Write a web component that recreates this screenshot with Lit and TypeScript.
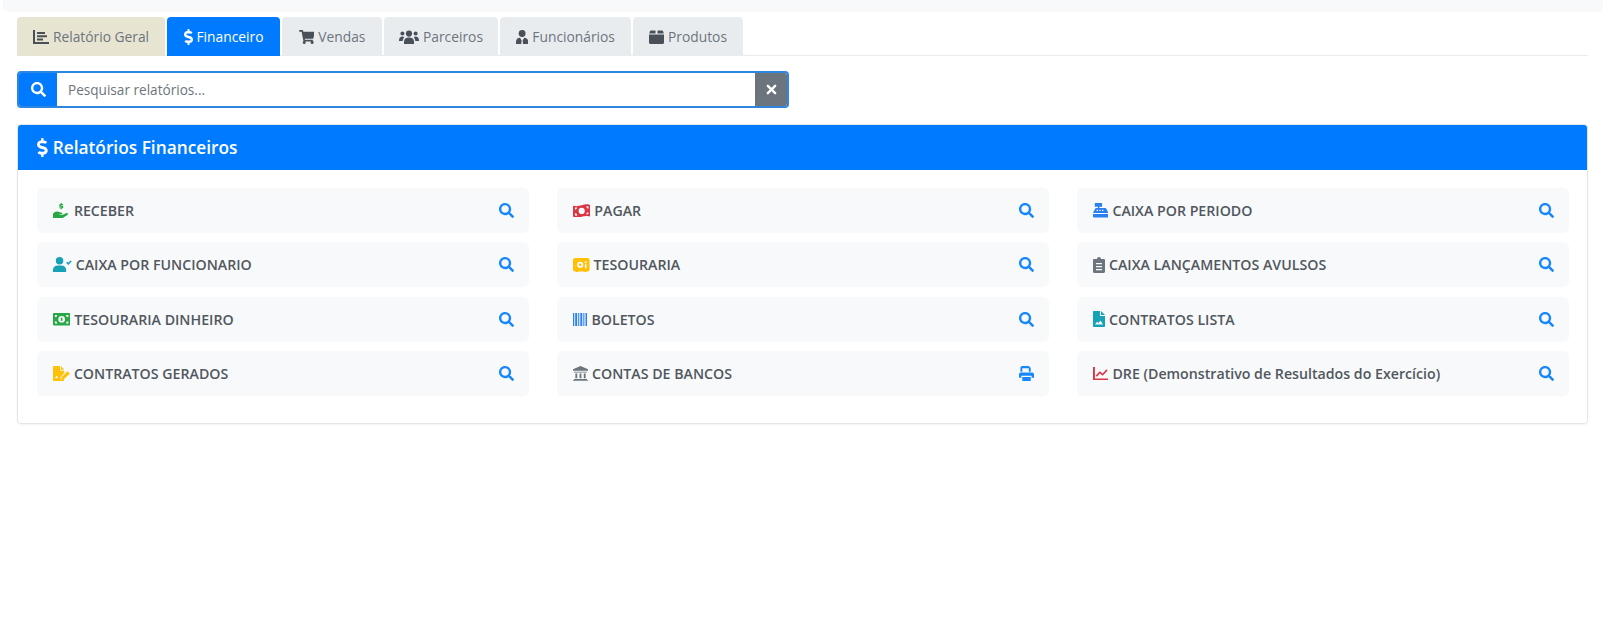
import { LitElement, html, svg, css } from "lit";
import { customElement } from "lit/decorators.js";

const icon = (vb: string, body: unknown, cls = "") =>
  html`<svg class="ic ${cls}" viewBox=${vb} fill="currentColor" aria-hidden="true">${body}</svg>`;

const p = (d: string) => svg`<path d=${d} />`;

const SEARCH =
  "M505 442.7L405.3 343c-4.5-4.5-10.6-7-17-7H372c27.6-35.3 44-79.7 44-128C416 93.1 322.9 0 208 0S0 93.1 0 208s93.1 208 208 208c48.3 0 92.7-16.4 128-44v16.3c0 6.4 2.5 12.5 7 17l99.7 99.7c9.4 9.4 24.6 9.4 33.9 0l28.3-28.3c9.4-9.4 9.4-24.6.1-34zM208 336c-70.7 0-128-57.2-128-128 0-70.7 57.2-128 128-128 70.7 0 128 57.2 128 128 0 70.7-57.2 128-128 128z";
const DOLLAR =
  "M209.2 233.4l-108-31.6C88.7 198.2 80 186.5 80 173.5c0-16.3 13.2-29.5 29.5-29.5h66.3c12.2 0 24.2 3.7 34.2 10.5 6.1 4.1 14.3 3.1 19.5-2l34.8-34c7.1-6.9 6.1-18.4-1.8-24.5C238 74.8 207.4 64.1 176 64V16c0-8.8-7.2-16-16-16h-32c-8.8 0-16 7.2-16 16v48h-2.5C45.8 64-5.4 118.7.5 183.6c4.2 46.1 39.4 83.6 83.8 96.6l102.5 30c12.5 3.7 21.2 15.3 21.2 28.3 0 16.3-13.2 29.5-29.5 29.5h-66.3C100 368 88 364.3 78 357.5c-6.1-4.1-14.3-3.1-19.5 2l-34.8 34c-7.1 6.9-6.1 18.4 1.8 24.5 24.5 19.2 55.1 29.9 86.5 30v48c0 8.8 7.2 16 16 16h32c8.8 0 16-7.2 16-16v-48.2c46.6-.9 90.3-28.6 105.7-72.7 21.5-61.6-14.6-124.8-72.5-141.7z";
const CART =
  "M528.12 301.319l47.273-208C578.806 78.301 567.391 64 551.99 64H159.208l-9.166-44.81C147.758 8.021 137.93 0 126.529 0H24C10.745 0 0 10.745 0 24v16c0 13.255 10.745 24 24 24h69.883l70.248 343.435C147.325 417.1 136 435.222 136 456c0 30.928 25.072 56 56 56s56-25.072 56-56c0-15.674-6.447-29.835-16.824-40h209.647C430.447 426.165 424 440.326 424 456c0 30.928 25.072 56 56 56s56-25.072 56-56c0-22.172-12.888-41.332-31.579-50.405l5.517-24.276c3.413-15.018-8.002-29.319-23.403-29.319H218.117l-6.545-32h293.145c11.206 0 20.92-7.754 23.403-18.681z";

const searchIcon = () => icon("0 0 512 512", p(SEARCH));
const dollarIcon = () => icon("0 0 288 512", p(DOLLAR));

const icons = {
  chartBar: () =>
    icon("0 0 16 14", p("M0 0h2v12h14v2H0zM4 2h8v2H4zM4 5.2h10v2H4zM4 8.4h6v2H4z")),
  cart: () => icon("0 0 576 512", p(CART)),
  users: () =>
    icon(
      "0 0 20 14",
      svg`<circle cx="10" cy="3.6" r="3.1"/><circle cx="3.4" cy="3.4" r="2"/><circle cx="16.6" cy="3.4" r="2"/><path d="M5 14v-2.2C5 9 7 7.6 10 7.6s5 1.4 5 4.2V14zM0 10.5C0 8 1.4 6.6 3.4 6.6c.8 0 1.4.2 2 .6C4.4 8.2 3.8 9.400 3.7 11H0zM20 10.500C20 8 18.600 6.600 16.600 6.600c-.8 0-1.400.2-2 .6 1 1 1.600 2.200 1.700 3.800H20z"/>`,
    ),
  userTie: () =>
    icon(
      "0 0 14 16",
      svg`<circle cx="7" cy="4" r="3.900"/><path d="M0 16v-2.500C0 10.600 2 8.800 4.600 8.800L6.400 12 6 16zM14 16v-2.500c0-2.900-2-4.700-4.600-4.700L7.600 12 8 16z"/>`,
    ),
  box: () =>
    icon(
      "0 0 15 14",
      svg`<path d="M0 4.500h15v8a1.500 1.500 0 0 1-1.500 1.500h-12A1.500 1.500 0 0 1 0 12.500zM2 0.500h4.500v3H0.300l.5-2A1.500 1.500 0 0 1 2 0.500zM8.500 0.500H13a1.500 1.500 0 0 1 1.200 1l.5 2H8.500z"/>`,
    ),
  times: () =>
    icon(
      "0 0 12 12",
      svg`<path d="M2 2l8 8M10 2l-8 8" fill="none" stroke="currentColor" stroke-width="2.600" stroke-linecap="round"/>`,
    ),
  print: () =>
    icon(
      "0 0 16 16",
      svg`<path d="M3.500 0h7l2 2v4h-2V2.500h-7V6h-2V2A2 2 0 0 1 3.500 0zM2 6.800h12a2 2 0 0 1 2 2V12.500h-2.500V10.500h-11V12.500H0V8.800a2 2 0 0 1 2-2zM3.500 11.800h9V16h-9z"/>`,
    ),
  hand: () =>
    icon(
      "0 0 18 16",
      svg`<path d="M0 11.500C1.500 9.500 3.500 8.800 5.500 9.300l3.700 1c1.200.3 1 1.900-.4 1.900H6.500v.6h3.200l4.300-2c1.500-.7 2.700.9 1.300 1.900l-4.500 3.100c-.5.300-1 .4-1.600.4H4.500L2.500 16H0z"/><path d="M8.100 0h1.300v1h1.300v1.200H8.300v.5h1.800c.5 0 .8.400.8.800v1.300c0 .5-.4.800-.8.800h-.7v1H8.100v-1H6.800V4.400h2.400v-.5H7.400c-.5 0-.8-.4-.8-.8V2c0-.5.4-.8.8-.8h.7z"/>`,
    ),
  moneyTilt: () =>
    icon(
      "0 0 18 14",
      svg`<path fill-rule="evenodd" d="M1 1.800C6 3.600 12 -1 17 .8c.6.2 1 .8 1 1.400v9.900c0 .6-.5 1-1 .8C12 11 6 15.500 1 13.700c-.6-.2-1-.8-1-1.400V2.600c0-.6.5-1 1-.8zM9 4a3.200 3.200 0 1 0 0 6.400A3.200 3.200 0 0 0 9 4zM2 3.500v2.400a2.300 2.300 0 0 0 2.300-2.200zM16 2.400l-2.300.3A2.300 2.300 0 0 0 16 4.800zM2 9.500v2.400l2.300.3A2.300 2.300 0 0 0 2 9.500zM16 8.500a2.300 2.300 0 0 0-2.300 2.300l2.300-.4z"/>`,
    ),
  vault: () =>
    icon(
      "0 0 16 14",
      svg`<path fill-rule="evenodd" d="M2 0h12a2 2 0 0 1 2 2v9a2 2 0 0 1-2 2h-1v1h-2v-1H5v1H3v-1H2a2 2 0 0 1-2-2V2a2 2 0 0 1 2-2zM7 3.500a3 3 0 1 0 0 6 3 3 0 0 0 0-6zM7 5.200a1.300 1.300 0 1 1 0 2.600 1.300 1.300 0 0 1 0-2.600zM11.500 3v2h1.500V3zM11.500 6v4H13V6z"/>`,
    ),
  userCheck: () =>
    icon(
      "0 0 20 16",
      svg`<circle cx="7" cy="4" r="4"/><path d="M0 16v-2.300C0 10.800 2.200 9 5 9h4c2.800 0 5 1.800 5 4.700V16zM14 6.300l1.200-1.200 1.100 1.100 2.500-2.500L20 4.900l-3.700 3.700z"/>`,
    ),
  clipboard: () =>
    icon(
      "0 0 12 16",
      svg`<path fill-rule="evenodd" d="M4 2a2 2 0 0 1 4 0h2.800c.7 0 1.200.5 1.200 1.200v11.600c0 .7-.5 1.200-1.200 1.200H1.200C.5 16 0 15.500 0 14.800V3.200C0 2.500.5 2 1.200 2zM3 6v1.300h6V6zM3 9v1.300h6V9zM3 12v1.300h6V12z"/>`,
    ),
  moneyBill: () =>
    icon(
      "0 0 18 13",
      svg`<path fill-rule="evenodd" d="M1 0h16a1 1 0 0 1 1 1v11a1 1 0 0 1-1 1H1a1 1 0 0 1-1-1V1a1 1 0 0 1 1-1zM9 3a3.500 3.500 0 1 0 0 7 3.500 3.500 0 0 0 0-7zM2 2v2.500A2.500 2.500 0 0 0 4.500 2zM13.500 2A2.500 2.500 0 0 0 16 4.500V2zM2 8.500V11h2.500A2.500 2.500 0 0 0 2 8.500zM16 8.500A2.500 2.500 0 0 0 13.500 11H16z"/><rect x="8.200" y="4.800" width="1.600" height="3.400"/>`,
    ),
  barcode: () =>
    icon(
      "0 0 15 14",
      svg`<rect x="0" width="1.300" height="14"/><rect x="2.300" width="2" height="14"/><rect x="5.400" width="1.100" height="14"/><rect x="7.600" width="2" height="14"/><rect x="10.700" width="1.100" height="14"/><rect x="13" width="2" height="14"/>`,
    ),
  fileImage: () =>
    icon(
      "0 0 12 16",
      svg`<path fill-rule="evenodd" d="M1 0h6v4.500c0 .3.200.5.500.5H12v10c0 .6-.4 1-1 1H1c-.6 0-1-.4-1-1V1c0-.6.400-1 1-1zM8 0l4 4H8zM2 13.500h8L7.500 9.500 5.500 12 4 10.800z"/>`,
    ),
  fileSign: () =>
    icon(
      "0 0 18 16",
      svg`<path fill-rule="evenodd" d="M1 0h6.500v4.500c0 .3.200.5.500.5h4v2.500L8 12v2l2 .2h2V15c0 .6-.4 1-1 1H1c-.6 0-1-.4-1-1V1c0-.6.400-1 1-1zM8.500 0l3.500 4H8.500zM2 12.500l2-2 1.500 1.500-1.500 1z"/><path d="M9 12l6.500-6.500L18 8l-6.500 6H9z"/>`,
    ),
  register: () =>
    icon(
      "0 0 17 16",
      svg`<path fill-rule="evenodd" d="M2 0h8v4H7v1.500h6.500c.6 0 1 .3 1.200 .9L17 11H0l2.300-4.600c.2-.6.600-.9 1.200-.9H5.500V4H2zM4 7.500v1.200h1.500V7.500zM7 7.500v1.200h1.500V7.500zM10 7.500v1.200h1.500V7.500z"/><path d="M0 12h17v3a1 1 0 0 1-1 1H1a1 1 0 0 1-1-1z"/>`,
    ),
  bank: () =>
    icon(
      "0 0 16 16",
      svg`<path d="M8 0l8 3.500V5H0V3.500zM1 6h14v1H1zM2.500 8h2v5h-2zM7 8h2v5H7zM11.500 8h2v5h-2zM1 13.800h14V15H1zM0 15.200h16V16H0z"/>`,
    ),
  chartLine: () =>
    icon(
      "0 0 16 14",
      svg`<path d="M0 0h2v12h14v2H0z"/><path d="M3.500 9.500l3.600-4 2.900 2.500 4.500-5" fill="none" stroke="currentColor" stroke-width="1.700"/>`,
    ),
};

type IconName = keyof typeof icons;

interface Tab {
  label: string;
  icon: () => unknown;
  width: number;
  kind?: string;
}

const TABS: Tab[] = [
  { label: "Relatório Geral", icon: icons.chartBar, width: 148, kind: "general" },
  { label: "Financeiro", icon: dollarIcon, width: 113, kind: "active" },
  { label: "Vendas", icon: icons.cart, width: 100 },
  { label: "Parceiros", icon: icons.users, width: 114 },
  { label: "Funcionários", icon: icons.userTie, width: 131 },
  { label: "Produtos", icon: icons.box, width: 110 },
];

interface Report {
  label: string;
  icon: IconName;
  color: string;
  size: string;
  print?: boolean;
}

const REPORTS: Report[] = [
  { label: "RECEBER", icon: "hand", color: "green", size: "s15" },
  { label: "PAGAR", icon: "moneyTilt", color: "red", size: "s13" },
  { label: "CAIXA POR PERIODO", icon: "register", color: "blue", size: "s14" },
  { label: "CAIXA POR FUNCIONARIO", icon: "userCheck", color: "teal", size: "s15" },
  { label: "TESOURARIA", icon: "vault", color: "yellow", size: "s14" },
  { label: "CAIXA LANÇAMENTOS AVULSOS", icon: "clipboard", color: "grey", size: "s16" },
  { label: "TESOURARIA DINHEIRO", icon: "moneyBill", color: "green", size: "s12" },
  { label: "BOLETOS", icon: "barcode", color: "blue", size: "s13" },
  { label: "CONTRATOS LISTA", icon: "fileImage", color: "teal", size: "s16" },
  { label: "CONTRATOS GERADOS", icon: "fileSign", color: "yellow", size: "s15" },
  { label: "CONTAS DE BANCOS", icon: "bank", color: "grey", size: "s15", print: true },
  { label: "DRE (Demonstrativo de Resultados do Exercício)", icon: "chartLine", color: "red", size: "s13" },
];

@customElement("app-root")
export class AppRoot extends LitElement {
  static styles = css`
    :host {
      display: block;
      font-family: "Open Sans", "Noto Sans", sans-serif;
      background: #fff;
      min-height: 636px;
    }
    .ic {
      display: block;
      height: 1em;
      width: auto;
      flex: none;
    }
    .strip {
      height: 12px;
      margin: 0 14px 0 3px;
      background: #f8f9fa;
      border-radius: 0 0 6px 6px;
    }
    .page {
      padding: 5px 29px 0 17px;
    }
    .tabs {
      display: flex;
      gap: 2px;
      height: 39px;
      box-sizing: border-box;
      border-bottom: 1px solid #e9ecef;
    }
    .tab {
      display: flex;
      align-items: center;
      justify-content: center;
      gap: 4px;
      box-sizing: border-box;
      height: 39px;
      background: #e9ecef;
      color: #6c757d;
      font-size: 13.8px;
      border-radius: 4px 4px 0 0;
    }
    .tab .ic {
      font-size: 14px;
      color: #495057;
    }
    .tab.general {
      background: #e8e4d2;
    }
    .tab.active {
      background: #007bff;
      color: #fff;
    }
    .tab.active .ic {
      color: #fff;
      font-size: 16px;
    }
    .search {
      display: flex;
      box-sizing: border-box;
      width: 772px;
      height: 37px;
      margin: 15px 0 16px;
      border: 2px solid #2f86df;
      border-radius: 4px;
      overflow: hidden;
    }
    .search-btn {
      display: flex;
      align-items: center;
      justify-content: center;
      flex: none;
      color: #fff;
      font-size: 15px;
    }
    .search-btn.go {
      width: 38px;
      background: #007bff;
    }
    .search-btn.clear {
      width: 32px;
      background: #6c757d;
      font-size: 11px;
    }
    .search-text {
      flex: 1;
      padding-left: 11px;
      line-height: 33px;
      font-size: 13.6px;
      color: #6c757d;
    }
    .card {
      border: 1px solid #e3e6e8;
      border-radius: 4px;
      height: 300px;
      box-sizing: border-box;
      overflow: hidden;
      box-shadow: 0 1px 2px rgba(0, 0, 0, 0.05);
    }
    .card-head {
      display: flex;
      align-items: center;
      gap: 5px;
      height: 45px;
      padding-left: 19px;
      background: #007bff;
      color: #fff;
      font-size: 17.3px;
      font-weight: 600;
    }
    .card-head .ic {
      font-size: 19px;
    }
    .grid {
      display: grid;
      grid-template-columns: repeat(3, 1fr);
      column-gap: 28px;
      row-gap: 9.4px;
      padding: 18px 18px 0 19px;
    }
    .item {
      display: flex;
      align-items: center;
      gap: 4px;
      height: 45px;
      padding: 0 16px;
      background: #f8f9fa;
      border-radius: 6px;
      font-size: 14.2px;
      font-weight: 600;
      color: #50575e;
    }
    .item-icon {
      flex: none;
    }
    .s12 { font-size: 12.5px; }
    .s13 { font-size: 13.5px; }
    .s14 { font-size: 14.5px; }
    .s15 { font-size: 15px; }
    .s16 { font-size: 16px; }
    .item-label {
      flex: 1;
    }
    .action {
      color: #007bff;
      font-size: 15px;
      opacity: 0.9;
      margin-right: -1px;
    }
    .green { color: #28a745; }
    .red { color: #dc3545; }
    .blue { color: #2a80f0; }
    .teal { color: #17a2b8; }
    .yellow { color: #ffc107; }
    .grey { color: #6c757d; }
  `;

  render() {
    return html`
      <div class="strip"></div>
      <div class="page">
        <div class="tabs">
          ${TABS.map(
            (t) => html`<div class="tab ${t.kind ?? ""}" style="width:${t.width}px">${t.icon()}<span>${t.label}</span></div>`,
          )}
        </div>
        <div class="search">
          <div class="search-btn go">${searchIcon()}</div>
          <div class="search-text">Pesquisar relatórios...</div>
          <div class="search-btn clear">${icons.times()}</div>
        </div>
        <div class="card">
          <div class="card-head">${dollarIcon()}<span>Relatórios Financeiros</span></div>
          <div class="grid">
            ${REPORTS.map(
              (r) => html`
                <div class="item">
                  <span class="item-icon ${r.color} ${r.size}">${icons[r.icon]()}</span>
                  <span class="item-label">${r.label}</span>
                  <span class="action">${r.print ? icons.print() : searchIcon()}</span>
                </div>
              `,
            )}
          </div>
        </div>
      </div>
    `;
  }
}
